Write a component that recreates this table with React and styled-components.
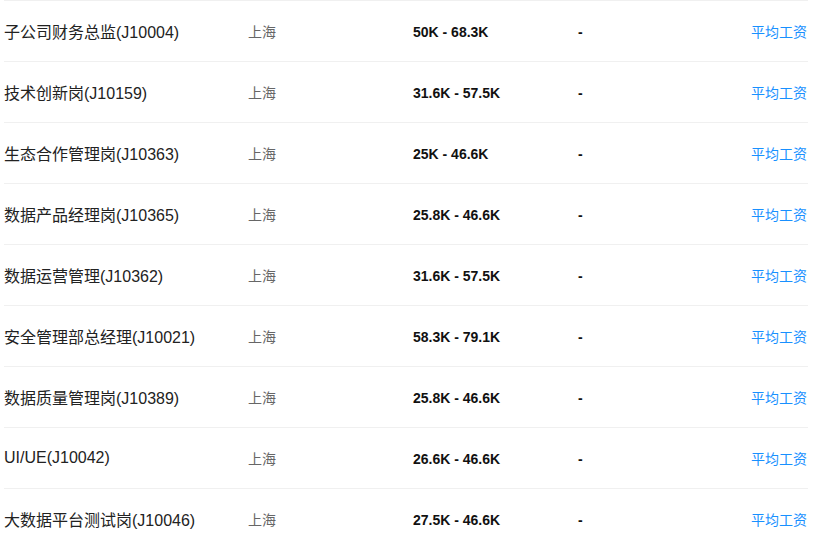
import styled, { createGlobalStyle } from 'styled-components'

const GlobalStyle = createGlobalStyle`
  body {
    margin: 0;
    background: #fff;
    font-family: "Liberation Sans", Arial, "Noto Sans CJK SC", sans-serif;
  }
`

const JobList = styled.div`
  width: 804px;
  margin-left: 4px;
  border-top: 1px solid #f0f0f0;
`

const JobRow = styled.div`
  display: grid;
  grid-template-columns: 244px 165px 165px 1fr auto;
  align-items: center;
  height: 60px;
  border-bottom: 1px solid #f0f0f0;
`

const JobName = styled.div`
  font-size: 16px;
  color: #222;
  white-space: nowrap;
`

const City = styled.div`
  font-size: 14px;
  color: #666;
`

const Salary = styled.div`
  margin-top: 2px;
  font-size: 14px;
  font-weight: 700;
  color: #111;
`

const Link = styled.a`
  margin-right: 1px;
  font-size: 14px;
  color: #1890ff;
  text-decoration: none;
  cursor: pointer;
`

const jobs = [
  { name: '子公司财务总监(J10004)', salary: '50K - 68.3K' },
  { name: '技术创新岗(J10159)', salary: '31.6K - 57.5K' },
  { name: '生态合作管理岗(J10363)', salary: '25K - 46.6K' },
  { name: '数据产品经理岗(J10365)', salary: '25.8K - 46.6K' },
  { name: '数据运营管理(J10362)', salary: '31.6K - 57.5K' },
  { name: '安全管理部总经理(J10021)', salary: '58.3K - 79.1K' },
  { name: '数据质量管理岗(J10389)', salary: '25.8K - 46.6K' },
  { name: 'UI/UE(J10042)', salary: '26.6K - 46.6K' },
  { name: '大数据平台测试岗(J10046)', salary: '27.5K - 46.6K' },
]

export default function App() {
  return (
    <>
      <GlobalStyle />
      <JobList>
        {jobs.map((job) => (
          <JobRow key={job.name}>
            <JobName>{job.name}</JobName>
            <City>上海</City>
            <Salary>{job.salary}</Salary>
            <Salary>-</Salary>
            <Link>平均工资</Link>
          </JobRow>
        ))}
      </JobList>
    </>
  )
}
